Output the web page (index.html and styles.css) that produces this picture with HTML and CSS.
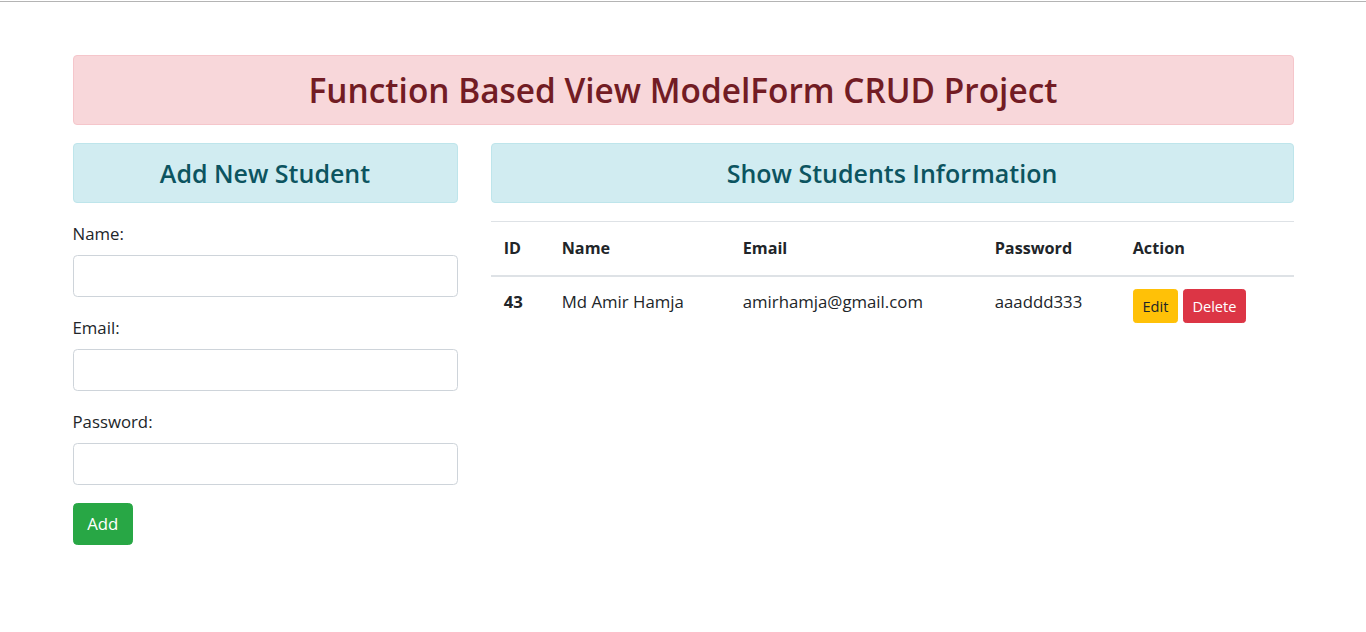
FILE: index.html
```html
<!DOCTYPE html>
<html lang="en">
<head>
<meta charset="utf-8">
<title>Function Based View ModelForm CRUD Project</title>
<link rel="stylesheet" href="styles.css">
</head>
<body>
<div class="topline"></div>
<div class="container">
  <h2 class="alert alert-danger title">Function Based View ModelForm CRUD Project</h2>
  <div class="row">
    <div class="col-left">
      <h4 class="alert alert-info sub">Add New Student</h4>
      <form class="form">
        <div class="form-group">
          <label class="label" for="name">Name:</label>
          <input class="form-control" id="name" type="text">
        </div>
        <div class="form-group">
          <label class="label" for="email">Email:</label>
          <input class="form-control" id="email" type="email">
        </div>
        <div class="form-group">
          <label class="label" for="password">Password:</label>
          <input class="form-control" id="password" type="password">
        </div>
        <button type="button" class="btn btn-success">Add</button>
      </form>
    </div>
    <div class="col-right">
      <h4 class="alert alert-info sub">Show Students Information</h4>
      <table class="table">
        <thead>
          <tr>
            <th class="c-id">ID</th>
            <th class="c-name">Name</th>
            <th class="c-email">Email</th>
            <th class="c-pass">Password</th>
            <th class="c-action">Action</th>
          </tr>
        </thead>
        <tbody>
          <tr>
            <th>43</th>
            <td>Md Amir Hamja</td>
            <td>amirhamja@gmail.com</td>
            <td>aaaddd333</td>
            <td><a class="btn-sm btn-warning" href="#">Edit</a> <button type="button" class="btn-sm btn-danger">Delete</button></td>
          </tr>
        </tbody>
      </table>
    </div>
  </div>
</div>
</body>
</html>
```

FILE: styles.css
```css
* { box-sizing: border-box; }
html, body { margin: 0; padding: 0; background: #fff; }
body {
  font-family: "Open Sans", "Noto Sans", sans-serif;
  font-size: 16.8px;
  line-height: 26.4px;
  color: #212529;
}
.topline { height: 1px; margin-top: 1px; background: #b4b4b4; }
.container { width: 1221px; margin: 0 auto; padding-top: 53px; }
.alert {
  margin: 0 0 18px;
  padding: 13px 22px;
  border: 1px solid transparent;
  border-radius: 4px;
  text-align: center;
  font-weight: 600;
}
.alert-danger { background: #f8d7da; border-color: #f5c6cb; color: #721c24; }
.alert-info { background: #d1ecf1; border-color: #bee5eb; color: #0c5460; }
.title { font-size: 33.4px; line-height: 42px; }
.sub { font-size: 25px; line-height: 32px; }
.row { display: flex; gap: 33px; }
.col-left { width: 385px; flex: none; }
.col-right { flex: 1; }
.form-group { margin-bottom: 17.6px; }
.label { display: block; margin-bottom: 8px; }
.form-control {
  display: block;
  width: 100%;
  height: 42px;
  padding: 6.6px 13.2px;
  font: inherit;
  color: #495057;
  background: #fff;
  border: 1px solid #ced4da;
  border-radius: 4.4px;
}
.btn {
  display: inline-block;
  font: inherit;
  line-height: 26.4px;
  padding: 6.6px 13.7px;
  border: 1px solid transparent;
  border-radius: 4.4px;
  cursor: pointer;
}
.btn-success { background: #28a745; border-color: #28a745; color: #fff; }
.table { width: 100%; border-collapse: collapse; }
.table th, .table td {
  padding: 13.2px;
  text-align: left;
  vertical-align: top;
  border-top: 1px solid #dee2e6;
}
.table th { font-weight: 700; }
.table thead th { font-size: 16.2px; border-bottom: 2px solid #dee2e6; vertical-align: bottom; }
.table tbody th, .table tbody td { padding-top: 12.4px; }
.c-id { width: 58px; }
.c-name { width: 181px; }
.c-email { width: 252px; }
.c-pass { width: 138px; }
.btn-sm {
  display: inline-block;
  font: inherit;
  font-size: 14.6px;
  line-height: 23px;
  padding: 4.5px 8.8px;
  border: 1px solid transparent;
  border-radius: 3.3px;
  text-decoration: none;
  vertical-align: middle;
  cursor: pointer;
}
.btn-warning { background: #ffc107; border-color: #ffc107; color: #212529; }
.btn-danger { background: #dc3545; border-color: #dc3545; color: #fff; }
```
